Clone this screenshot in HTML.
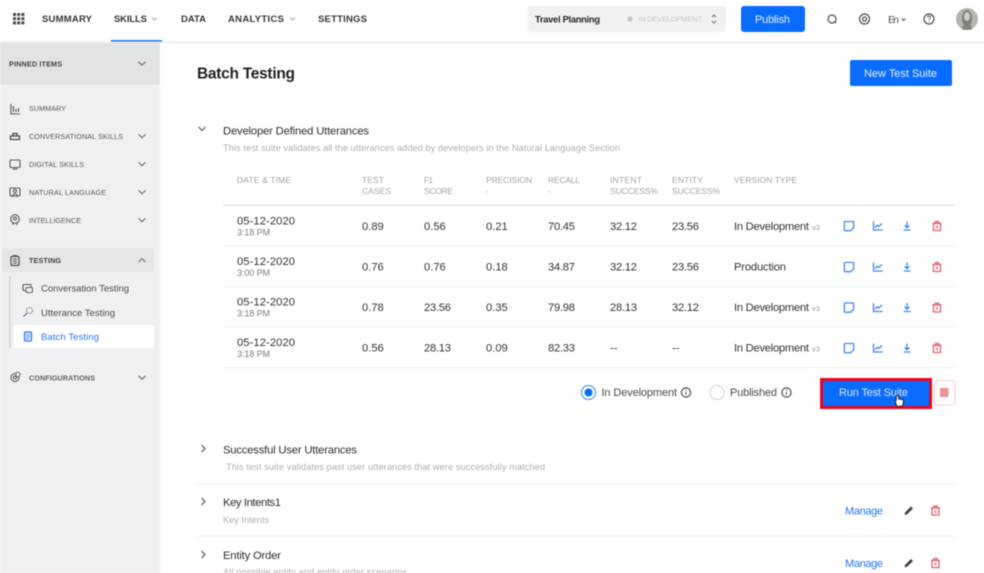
<!DOCTYPE html>
<html><head><meta charset="utf-8"><title>Batch Testing</title>
<style>
html,body{margin:0;padding:0;background:#fff;width:984px;height:573px;overflow:hidden}
svg{display:block;position:absolute;left:0;top:0;filter:blur(.5px)}
text{font-family:"Liberation Sans",sans-serif;white-space:pre}
.nav{font-size:9.5px;font-weight:700;fill:#33363a}
.side{font-size:7.2px;fill:#55595e}
.sb{font-size:7.2px;font-weight:700;fill:#3f4347}
.sub{font-size:9.5px;fill:#474b50}
.th{font-size:8.5px;fill:#a0a3a8}
.td{font-size:11.2px;fill:#2f3236}
.tm{font-size:9px;fill:#7a7d82}
.h{font-size:11.2px;fill:#2b2e32}
.d{font-size:9.2px;fill:#aaadb1}
.m{font-size:11px;fill:#2478f6}
.lb{font-size:11px;fill:#484b50}
.ch{fill:none;stroke:#6a6e73;stroke-width:1.1}
.si{fill:none;stroke:#55595e;stroke-width:1.1}
.bi{fill:none;stroke:#4189f6;stroke-width:1.3}
.ri{fill:none;stroke:#e55f70;stroke-width:1.3}
.hi{fill:none;stroke:#484b50;stroke-width:1.2}
</style></head><body>
<svg width="984" height="573" viewBox="0 0 984 573" xmlns="http://www.w3.org/2000/svg">
<defs>
<g id="c"><path class="ch" d="M-3.5 -1.7L0 1.7L3.5 -1.7"/></g>
<g id="note"><path class="bi" d="M-4 -4.5H4Q4.7 -4.500 4.700 -3.800V1.700L1.700 4.700H-3.700Q-4.700 4.700 -4.700 3.700V-3.700Q-4.700 -4.500 -4 -4.500Z"/></g>
<g id="chart"><path class="bi" d="M-4.500 -4.500V4H4.800M-3 1.500L-.8 -.8L.8 .5L4 -2.500"/></g>
<g id="dl"><path class="bi" d="M0 -4.500V1.500M-2.500 -.8L0 1.800L2.500 -.8M-3.500 4H3.500"/></g>
<g id="tr"><path class="ri" d="M-3.500 -2.500H3.500V4.500H-3.500ZM-4.500 -2.700H4.500M-1.500 -2.700V-4.500H1.500V-2.700M0 -.5V2.500"/></g>
<g id="acts"><use href="#note" x="0"/><use href="#chart" x="29"/><use href="#dl" x="58"/><use href="#tr" x="88"/></g>
<g id="info"><circle r="4.600" class="hi"/><path d="M0 -.5V2.400M0 -2.600V-1.500" stroke="#484b50" stroke-width="1"/></g>
<g id="pen"><path d="M-4.500 4.500L-3.800 1.800L2 -4L4 -2L-1.800 3.800Z" fill="#3f4246"/></g>
</defs>

<!-- top bar -->
<rect x="0" y="41" width="984" height="2.500" fill="#f1f2f3"/>
<g fill="#484b50">
<rect x="13" y="13" width="3" height="3"/><rect x="17.200" y="13" width="3" height="3"/><rect x="21.400" y="13" width="3" height="3"/>
<rect x="13" y="17.200" width="3" height="3"/><rect x="17.200" y="17.200" width="3" height="3"/><rect x="21.400" y="17.200" width="3" height="3"/>
<rect x="13" y="21.400" width="3" height="3"/><rect x="17.200" y="21.400" width="3" height="3"/><rect x="21.400" y="21.400" width="3" height="3"/>
</g>
<text class="nav" x="42" y="22" textLength="50">SUMMARY</text>
<text class="nav" x="114" y="22" textLength="33">SKILLS</text>
<path d="M152 17.500L154.500 20L157 17.500" fill="none" stroke="#a5a8ac"/>
<text class="nav" x="181" y="22" textLength="25">DATA</text>
<text class="nav" x="228" y="22" textLength="56">ANALYTICS</text>
<path d="M290 17.500L292.500 20L295 17.500" fill="none" stroke="#a5a8ac"/>
<text class="nav" x="318" y="22" textLength="49">SETTINGS</text>
<rect x="111" y="40" width="51" height="1.700" fill="#2e7bf6"/>

<rect x="528" y="6" width="198" height="26" rx="2" fill="#f0f1f3"/>
<text x="535" y="22.500" font-size="9.300" font-weight="700" fill="#1f2125" textLength="65">Travel Planning</text>
<circle cx="630" cy="19" r="2.600" fill="#c3c5c9"/>
<text x="638" y="21.500" font-size="7.300" fill="#c8cacd" textLength="64">IN DEVELOPMENT</text>
<path d="M712 17L714 15L716 17M712 21L714 23L716 21" fill="none" stroke="#6a6d72"/>
<rect x="741" y="6" width="64" height="26" rx="3" fill="#0a6cff"/>
<text x="755" y="23" font-size="11" fill="#e6f0ff" textLength="35">Publish</text>
<path d="M836 23L834.600 21.600" stroke="#4a4d52" stroke-width="1.300"/><circle cx="832" cy="19" r="4" fill="none" stroke="#4a4d52" stroke-width="1.200"/>
<circle cx="864.500" cy="19" r="5" class="hi"/><circle cx="864.500" cy="19" r="2" class="hi"/>
<text x="888" y="23" font-size="10.500" fill="#4a4d52" textLength="11">En</text>
<path d="M901.500 18.500L903.500 20.500L905.500 18.500" fill="none" stroke="#4a4d52"/>
<circle cx="929" cy="19" r="5" class="hi"/><path d="M927.500 17.500Q927.500 16 929 16Q930.600 16 930.600 17.500Q930.600 18.500 929 19.500V20.300M929 21.200V22" fill="none" stroke="#55585d" stroke-width=".9"/>
<circle cx="967" cy="19" r="11" fill="#b5b4b1"/>
<ellipse cx="967" cy="18" rx="5" ry="8" fill="#7f7c78"/><ellipse cx="967" cy="16.500" rx="3" ry="4.500" fill="#cfcbc6"/><path d="M962 29.500Q963 23 967 23Q971 23 972 29.500Q967 30.500 962 29.500Z" fill="#85827e"/>

<!-- sidebar -->
<rect x="0" y="43" width="160" height="530" fill="#eff0f2"/>
<rect x="0" y="43" width="160" height="42" fill="#e2e3e5"/>
<text class="sb" x="9" y="66.500" textLength="53">PINNED ITEMS</text>
<use href="#c" x="142" y="63.500"/>

<path class="si" d="M11 104V114H20M13.500 106V112M16 109V112M18.500 108V112"/>
<text class="side" x="29" y="111" textLength="37">SUMMARY</text>

<path d="M10.500 139.500V136H19.500V139.500ZM13 136V133.500H17V136" fill="none" stroke="#484b50" stroke-width="1.300"/>
<text class="side" x="29" y="138.800" textLength="94">CONVERSATIONAL SKILLS</text>
<use href="#c" x="142" y="136"/>

<rect x="10" y="160" width="10" height="7.500" rx="1" class="si"/><path class="si" d="M12.500 169H17.500"/>
<text class="side" x="29" y="166.800" textLength="55">DIGITAL SKILLS</text>
<use href="#c" x="142" y="164"/>

<rect x="10" y="188" width="10" height="8" rx="1.500" class="si"/><circle cx="15" cy="191" r="1.500" class="si"/><path class="si" d="M12.500 197Q12.500 194 15 194Q17.500 194 17.500 197"/>
<text class="side" x="29" y="194.800" textLength="77">NATURAL LANGUAGE</text>
<use href="#c" x="142" y="192"/>

<circle cx="15" cy="219" r="4.300" class="si"/><circle cx="15" cy="218.500" r="1.500" class="si"/><path class="si" d="M13 223V225M17 223V225"/>
<text class="side" x="29" y="222.800" textLength="52">INTELLIGENCE</text>
<use href="#c" x="142" y="220"/>

<rect x="2" y="248" width="152" height="24" rx="3" fill="#e5e6e8"/>
<rect x="11" y="256.500" width="8" height="9" rx="1" fill="none" stroke="#4f5357" stroke-width="1.300"/><path d="M13 255.500H17M13 259H17M13 261H17M13 263H17" stroke="#4f5357"/>
<text class="sb" x="29" y="263" textLength="32">TESTING</text>
<path class="ch" d="M138.500 262L142 258.600L145.500 262"/>
<rect x="9" y="276" width="1.700" height="72" fill="#d6d7da"/>
<rect x="23" y="284.500" width="8" height="6" rx="1" class="si"/><rect x="26" y="287.500" width="6.500" height="5" rx="1" fill="#eff0f2" stroke="#5f6368"/>
<text class="sub" x="41" y="291.500" textLength="88">Conversation Testing</text>
<circle cx="29.500" cy="310.500" r="3" fill="none" stroke="#777a7f" stroke-dasharray="1.500 1"/><path d="M27 313L23.500 316.500" stroke="#5f6368" stroke-width="1.100"/>
<text class="sub" x="41" y="316" textLength="74">Utterance Testing</text>
<rect x="14" y="325" width="140" height="23" rx="2" fill="#fff"/>
<rect x="24.500" y="332" width="7" height="9" rx="1" fill="#d5e4fc" stroke="#2f7bf5" stroke-width="1.300"/><path d="M26.500 335H29.500M26.500 337H29.500M26.500 339H28" stroke="#2f7bf5" stroke-width=".8"/>
<text class="sub" x="41" y="340" style="fill:#2478f6" textLength="58">Batch Testing</text>
<circle cx="15" cy="377.500" r="4" class="si"/><circle cx="15" cy="377.500" r="1.500" class="si"/><circle cx="18" cy="374.500" r="2.200" fill="#eff0f2" stroke="#5f6368"/>
<text class="side" x="29" y="380.300" textLength="66" style="font-weight:700;fill:#5c6065">CONFIGURATIONS</text>
<use href="#c" x="142" y="377.500"/>

<!-- main header -->
<text x="197" y="78.500" font-size="15.500" font-weight="700" fill="#1f2125" textLength="98">Batch Testing</text>
<rect x="850" y="60" width="102" height="26" rx="2" fill="#0a6cff"/>
<text x="864" y="77" font-size="11" fill="#e6f0ff" textLength="73">New Test Suite</text>

<!-- developer section -->
<path d="M198.500 127L202 130.500L205.500 127" fill="none" stroke="#45484c" stroke-width="1.100"/>
<text class="h" x="223" y="134.500" textLength="146">Developer Defined Utterances</text>
<text class="d" x="223" y="151" textLength="397">This test suite validates all the utterances added by developers in the Natural Language Section</text>

<text class="th" x="237" y="183" textLength="54">DATE &amp; TIME</text>
<text class="th" x="362" y="183" textLength="22">TEST</text><text class="th" x="362" y="194" textLength="29">CASES</text>
<text class="th" x="424" y="183" textLength="9">F1</text><text class="th" x="424" y="194" textLength="29">SCORE</text>
<text class="th" x="486" y="183" textLength="46">PRECISION</text><text class="th" x="486" y="194">-</text>
<text class="th" x="548" y="183" textLength="32">RECALL</text><text class="th" x="548" y="194">-</text>
<text class="th" x="610" y="183" textLength="32">INTENT</text><text class="th" x="610" y="194" textLength="48">SUCCESS%</text>
<text class="th" x="672" y="183" textLength="31">ENTITY</text><text class="th" x="672" y="194" textLength="48">SUCCESS%</text>
<text class="th" x="734" y="183" textLength="63">VERSION TYPE</text>
<rect x="223" y="204.500" width="732" height="1.500" fill="#e5e6e9"/>
<rect x="223" y="245.500" width="732" height="1.200" fill="#f1f2f3"/>
<rect x="223" y="286.500" width="732" height="1.200" fill="#f1f2f3"/>
<rect x="223" y="326.500" width="732" height="1.200" fill="#f1f2f3"/>
<rect x="223" y="367" width="732" height="1.200" fill="#f1f2f3"/>

<!-- rows -->
<text class="td" x="237" y="224.500" textLength="58">05-12-2020</text><text class="tm" x="237" y="235.500" textLength="33">3:18 PM</text>
<text class="td" x="362" y="229.800">0.89</text><text class="td" x="424" y="229.800">0.56</text><text class="td" x="486" y="229.800">0.21</text><text class="td" x="548" y="229.800" textLength="27">70.45</text><text class="td" x="610" y="229.800" textLength="27">32.12</text><text class="td" x="672" y="229.800" textLength="27">23.56</text>
<text class="td" x="734" y="229.800" textLength="75">In Development</text><text x="812" y="229.800" font-size="7.500" fill="#94979b">v3</text>
<use href="#acts" x="849" y="226"/>

<text class="td" x="237" y="265" textLength="58">05-12-2020</text><text class="tm" x="237" y="276" textLength="33">3:00 PM</text>
<text class="td" x="362" y="270.500">0.76</text><text class="td" x="424" y="270.500">0.76</text><text class="td" x="486" y="270.500">0.18</text><text class="td" x="548" y="270.500" textLength="27">34.87</text><text class="td" x="610" y="270.500" textLength="27">32.12</text><text class="td" x="672" y="270.500" textLength="27">23.56</text>
<text class="td" x="734" y="270.500" textLength="52">Production</text>
<use href="#acts" x="849" y="267"/>

<text class="td" x="237" y="305.500" textLength="58">05-12-2020</text><text class="tm" x="237" y="316.500" textLength="33">3:18 PM</text>
<text class="td" x="362" y="311">0.78</text><text class="td" x="424" y="311" textLength="27">23.56</text><text class="td" x="486" y="311">0.35</text><text class="td" x="548" y="311" textLength="27">79.98</text><text class="td" x="610" y="311" textLength="27">28.13</text><text class="td" x="672" y="311" textLength="27">32.12</text>
<text class="td" x="734" y="311" textLength="75">In Development</text><text x="812" y="311" font-size="7.500" fill="#94979b">v3</text>
<use href="#acts" x="849" y="307.500"/>

<text class="td" x="237" y="346" textLength="58">05-12-2020</text><text class="tm" x="237" y="357" textLength="33">3:18 PM</text>
<text class="td" x="362" y="351.500">0.56</text><text class="td" x="424" y="351.500" textLength="27">28.13</text><text class="td" x="486" y="351.500">0.09</text><text class="td" x="548" y="351.500" textLength="27">82.33</text><text class="td" x="610" y="351.500">--</text><text class="td" x="672" y="351.500">--</text>
<text class="td" x="734" y="351.500" textLength="75">In Development</text><text x="812" y="351.500" font-size="7.500" fill="#94979b">v3</text>
<use href="#acts" x="849" y="348"/>

<!-- radios -->
<circle cx="588.500" cy="392.500" r="7" fill="#fff" stroke="#5b9bf8" stroke-width="1.200"/><circle cx="588.500" cy="392.500" r="4" fill="#0a6cff"/>
<text class="lb" x="601.500" y="396" textLength="75.500">In Development</text>
<use href="#info" x="686" y="392.500"/>
<circle cx="717" cy="392.500" r="7" fill="#fff" stroke="#d8d9dc" stroke-width="1.200"/>
<text class="lb" x="730" y="396" textLength="47">Published</text>
<use href="#info" x="786.500" y="392.500"/>

<!-- run button -->
<rect x="821.500" y="379.500" width="109" height="28" fill="#0a6cff" stroke="#e8061c" stroke-width="3"/>
<text x="839" y="396" font-size="11" fill="#d9e8ff" textLength="69">Run Test Suite</text>
<rect x="934" y="380.500" width="21" height="24.500" rx="3" fill="#fff" stroke="#f6c9cf" stroke-width="1.100"/>
<rect x="940" y="388" width="8.500" height="9" fill="#ee8f9b"/>
<!-- cursor -->
<path d="M896.500 405.500L895 401Q894.700 399.500 896.200 400.300V395.800Q897.500 394.600 898.600 395.800V398.800L902.300 399.500Q903.800 399.900 903.500 401.800L902.800 406L897.500 406.500Z" fill="#fff" stroke="#222" stroke-width="1.100"/>

<!-- collapsed sections -->
<path class="ch" d="M201.500 445L205 448.500L201.500 452" style="stroke:#45484c"/>
<text class="h" x="223" y="453.500" textLength="134">Successful User Utterances</text>
<text class="d" x="226" y="470" textLength="319">This test suite validates past user utterances that were successfully matched</text>
<rect x="197" y="483.500" width="758" height="1.200" fill="#f0f1f2"/>

<path class="ch" d="M201.500 498L205 501.500L201.500 505" style="stroke:#45484c"/>
<text class="h" x="223" y="506" textLength="58">Key Intents1</text>
<text class="d" x="223" y="523" textLength="46">Key Intents</text>
<rect x="197" y="535.500" width="758" height="1.200" fill="#f0f1f2"/>
<text class="m" x="845" y="514.500" textLength="38">Manage</text>
<use href="#pen" x="909" y="510.500"/>
<use href="#tr" x="935.500" y="510.500"/>

<path class="ch" d="M201.500 551L205 554.500L201.500 558" style="stroke:#45484c"/>
<text class="h" x="223" y="559" textLength="58">Entity Order</text>
<text class="d" x="223" y="575" textLength="184">All possible entity and entity order scenarios</text>
<text class="m" x="845" y="567" textLength="38">Manage</text>
<use href="#pen" x="909" y="563"/>
<use href="#tr" x="935.500" y="563"/>
</svg>
</body></html>
